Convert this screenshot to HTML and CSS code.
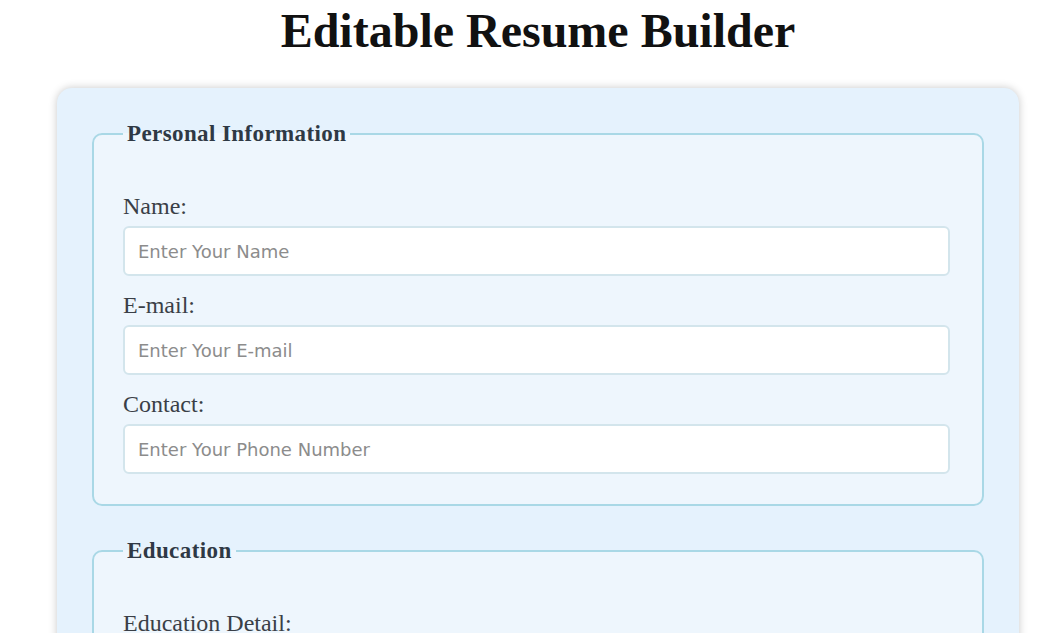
FILE: index.html
```html
<!DOCTYPE html>
<html lang="en">
<head>
<meta charset="utf-8">
<title>Editable Resume Builder</title>
<link rel="stylesheet" href="styles.css">
</head>
<body>
<div class="page">
  <h1 class="title">Editable Resume Builder</h1>
  <form class="card">
    <fieldset class="section">
      <legend class="legend">Personal Information</legend>
      <div class="field">
        <label class="label" for="name">Name:</label>
        <input class="input" id="name" type="text" placeholder="Enter Your Name">
      </div>
      <div class="field">
        <label class="label" for="email">E-mail:</label>
        <input class="input" id="email" type="email" placeholder="Enter Your E-mail">
      </div>
      <div class="field">
        <label class="label" for="contact">Contact:</label>
        <input class="input" id="contact" type="text" placeholder="Enter Your Phone Number">
      </div>
    </fieldset>
    <fieldset class="section">
      <legend class="legend">Education</legend>
      <div class="field">
        <label class="label" for="edu">Education Detail:</label>
        <input class="input" id="edu" type="text" placeholder="Enter Your Education">
      </div>
    </fieldset>
  </form>
</div>
</body>
</html>
```

FILE: styles.css
```css
html, body {
  margin: 0;
  padding: 0;
  background: #ffffff;
}

body {
  font-family: "Liberation Serif", "Times New Roman", serif;
  color: #333;
}

.page {
  width: 962px;
  margin-left: 57px;
  padding-top: 1px;
}

.title {
  margin: 0;
  padding-top: 2px;
  height: 85px;
  text-align: center;
  font-size: 48px;
  font-weight: bold;
  line-height: 56px;
  color: #111;
}

.card {
  background: #e5f2fd;
  border-radius: 15px;
  box-shadow: 0 0 9px rgba(0, 0, 0, 0.22);
  padding: 32px 35px 40px 35px;
  display: flex;
  flex-direction: column;
  gap: 31px;
}

.section {
  margin: 0;
  background: #eef6fd;
  border: 2px solid #a9d8e6;
  border-radius: 10px;
  padding: 45px 32px 30px 29px;
  display: flex;
  flex-direction: column;
  gap: 15px;
}

.legend {
  padding: 0 4px;
  font-size: 23px;
  font-weight: bold;
  line-height: 27px;
  letter-spacing: 0.4px;
  color: #2f3945;
}

.field {
  display: flex;
  flex-direction: column;
  gap: 6px;
}

.label {
  font-size: 24px;
  line-height: 28px;
  color: #3a3f47;
}

.input {
  box-sizing: border-box;
  width: 100%;
  height: 50px;
  margin: 0;
  padding: 0 13px;
  border: 2px solid #d3e5ec;
  border-radius: 6px;
  background: #ffffff;
  font-family: "DejaVu Sans", Verdana, sans-serif;
  font-size: 18px;
  color: #333;
  outline: none;
}

.input::placeholder {
  color: #8c8c8c;
}
```
